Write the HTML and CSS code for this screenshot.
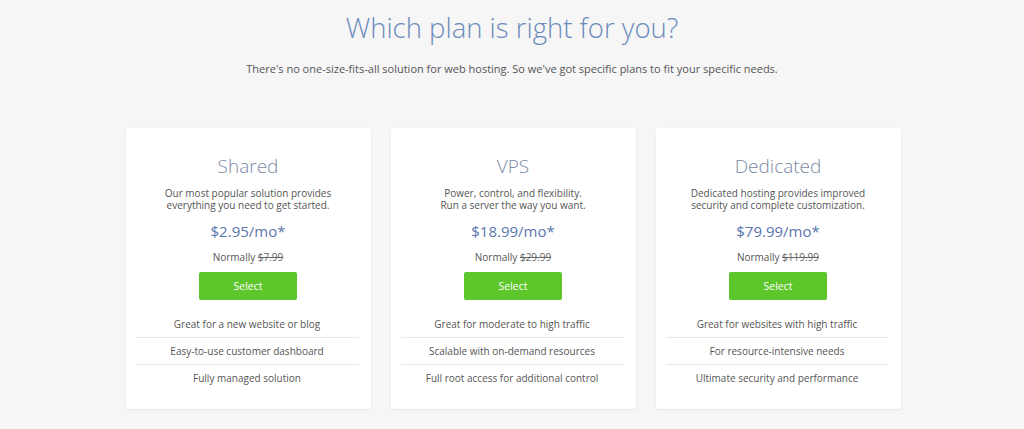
FILE: index.html
```html
<!DOCTYPE html>
<html lang="en">
<head>
<meta charset="utf-8">
<title>Which plan is right for you?</title>
<link rel="stylesheet" href="styles.css">
</head>
<body>
<section class="plans">
  <h1 class="plans-title">Which plan is right for you?</h1>
  <p class="plans-sub">There's no one-size-fits-all solution for web hosting. So we've got specific plans to fit your specific needs.</p>
  <div class="cards">
    <div class="card">
      <h2 class="card-name">Shared</h2>
      <p class="card-desc">Our most popular solution provides<br>everything you need to get started.</p>
      <div class="card-price">$2.95/mo*</div>
      <div class="card-normal">Normally <s>$7.99</s></div>
      <a class="btn" href="#">Select</a>
      <ul class="features">
        <li>Great for a new website or blog</li>
        <li>Easy-to-use customer dashboard</li>
        <li>Fully managed solution</li>
      </ul>
    </div>
    <div class="card">
      <h2 class="card-name">VPS</h2>
      <p class="card-desc">Power, control, and flexibility.<br>Run a server the way you want.</p>
      <div class="card-price">$18.99/mo*</div>
      <div class="card-normal">Normally <s>$29.99</s></div>
      <a class="btn" href="#">Select</a>
      <ul class="features">
        <li>Great for moderate to high traffic</li>
        <li>Scalable with on-demand resources</li>
        <li>Full root access for additional control</li>
      </ul>
    </div>
    <div class="card">
      <h2 class="card-name">Dedicated</h2>
      <p class="card-desc">Dedicated hosting provides improved<br>security and complete customization.</p>
      <div class="card-price">$79.99/mo*</div>
      <div class="card-normal">Normally <s>$119.99</s></div>
      <a class="btn" href="#">Select</a>
      <ul class="features">
        <li>Great for websites with high traffic</li>
        <li>For resource-intensive needs</li>
        <li>Ultimate security and performance</li>
      </ul>
    </div>
  </div>
</section>
</body>
</html>
```

FILE: styles.css
```css
* { box-sizing: border-box; }
html, body { margin: 0; padding: 0; }
body {
  background: #f6f6f7;
  font-family: "Open Sans", "Liberation Sans", sans-serif;
  color: #555;
  width: 1024px;
  height: 429px;
  overflow: hidden;
}
.plans {
  display: flex;
  flex-direction: column;
  align-items: center;
  padding-top: 9px;
}
.plans-title {
  margin: 0;
  font-size: 27.5px;
  font-weight: 300;
  color: #6c8bbb;
  line-height: 38px;
}
.plans-sub {
  margin: 14px 0 0;
  font-size: 11px;
  color: #555;
  line-height: 16px;
}
.cards {
  display: flex;
  gap: 20px;
  margin-top: 51px;
  margin-left: 2px;
}
.card {
  width: 245px;
  height: 281px;
  background: #fff;
  border-radius: 3px;
  box-shadow: 0 1px 2px rgba(0,0,0,0.08);
  display: flex;
  flex-direction: column;
  align-items: center;
  padding-top: 26px;
}
.card-name {
  margin: 0;
  font-size: 19px;
  font-weight: 300;
  color: #7a8aa6;
  line-height: 24px;
}
.card-desc {
  margin: 9px 0 0;
  font-size: 10px;
  line-height: 12px;
  text-align: center;
  color: #555;
}
.card-price {
  margin-top: 10px;
  font-size: 15px;
  color: #5a76ad;
  line-height: 20px;
}
.card-normal {
  margin-top: 9px;
  font-size: 10px;
  color: #555;
  line-height: 14px;
}
.card-normal s { color: #666; }
.btn {
  display: flex;
  align-items: center;
  justify-content: center;
  margin-top: 8px;
  width: 98px;
  height: 28px;
  background: #5dc62a;
  border-radius: 2px;
  color: #fff;
  font-size: 10.5px;
  text-decoration: none;
}
.features {
  list-style: none;
  margin: 11px 0 0;
  padding: 0 12px 0 10px;
  width: 100%;
}
.features li {
  font-size: 10px;
  color: #555;
  text-align: center;
  line-height: 26px;
  border-bottom: 1px solid #e8e8e8;
}
.features li:last-child { border-bottom: none; }
```
